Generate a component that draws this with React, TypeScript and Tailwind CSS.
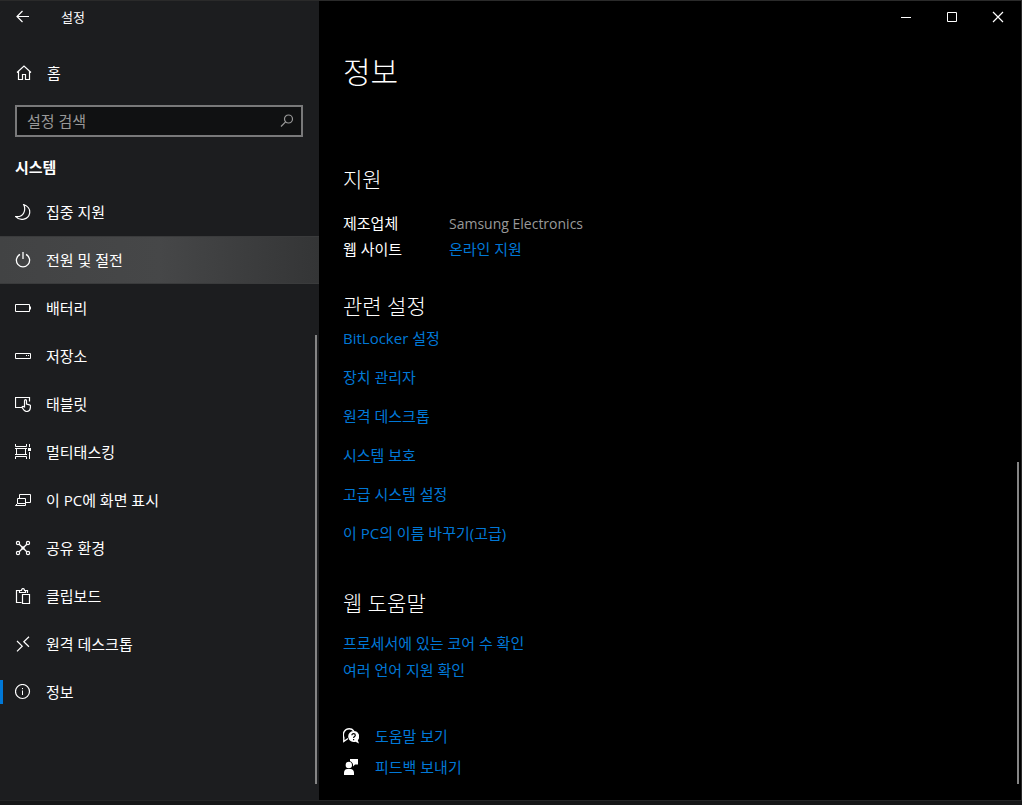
import { useState, type ReactNode } from 'react';

type NavItem = {
  id: string;
  label: string;
  icon: ReactNode;
};

function Icon({ children }: { children: ReactNode }) {
  return (
    <svg width="16" height="16" viewBox="0 0 16 16" fill="none" stroke="currentColor" strokeWidth="1" className="shrink-0" aria-hidden="true">
      {children}
    </svg>
  );
}

const navItems: NavItem[] = [
  {
    id: 'focus',
    label: '집중 지원',
    icon: (
      <Icon>
        <path d="M8.700.6c4 1.300 6.600 4.700 5.900 8.700-1.200 6.200-9.300 8.200-13.900 3.300 3.300.4 6.500-.6 8-3.600 1.300-2.600 1.300-5.600 0-8.400z" strokeWidth="1.200" />
      </Icon>
    ),
  },
  {
    id: 'power',
    label: '전원 및 절전',
    icon: (
      <Icon>
        <path d="M5 2.300a6.600 6.600 0 1 0 6 0M8 0v7" strokeWidth="1.300" />
      </Icon>
    ),
  },
  {
    id: 'battery',
    label: '배터리',
    icon: (
      <Icon>
        <path d="M.5 4.500h14v7H.5zM15.500 6.500v3" />
      </Icon>
    ),
  },
  {
    id: 'storage',
    label: '저장소',
    icon: (
      <Icon>
        <path d="M.5 5.500h15v5H.5zM11 7.500h1M13 7.500h1" />
      </Icon>
    ),
  },
  {
    id: 'tablet',
    label: '태블릿',
    icon: (
      <Icon>
        <path d="M7 11.500H.5v-10h14v4" strokeWidth="1.200" />
        <path
          d="M9.500 11V4.700c0-1.400 2-1.400 2 0V8l3 .8c.7.200 1 .6 1 1.200 0 3-.8 5.500-3.800 5.500-2.200 0-3-1.200-4.300-3.500-.8-1.300.6-2.100 1.300-1.300z"
          strokeWidth="1.200"
        />
      </Icon>
    ),
  },
  {
    id: 'multitasking',
    label: '멀티태스킹',
    icon: (
      <Icon>
        <path d="M.5 0v2.500h11V0M.5 15v-2.500h11V15M1.500 5v5.500M10.500 5v5.500M0 4.500h12M0 10.500h12M14.500 0v3M14.500 8v7" />
        <path d="M13 4h3v3h-3z" fill="currentColor" stroke="none" />
      </Icon>
    ),
  },
  {
    id: 'projecting',
    label: '이 PC에 화면 표시',
    icon: (
      <Icon>
        <path d="M4.500 6V2.500h11v8H11M2.500 6.500h8v5h-8zM.5 13.500l2-2h8v2z" />
      </Icon>
    ),
  },
  {
    id: 'shared',
    label: '공유 환경',
    icon: (
      <Icon>
        <path d="M4.200 4.200l7.600 7.600M11.800 4.200l-7.600 7.600" strokeWidth="1.300" />
        <circle cx="3" cy="3" r="1.600" strokeWidth="1.200" />
        <circle cx="13" cy="3" r="1.600" strokeWidth="1.200" />
        <circle cx="3" cy="13" r="1.600" strokeWidth="1.200" />
        <circle cx="13" cy="13" r="1.600" strokeWidth="1.200" />
        <circle cx="8" cy="8" r="1.200" fill="currentColor" />
      </Icon>
    ),
  },
  {
    id: 'clipboard',
    label: '클립보드',
    icon: (
      <Icon>
        <path d="M6.500 14.500h-5v-12H5M10 2.500h2.500V5M4.500 4.500v-2h2c0-2.600 3-2.600 3 0h1v2zM7.500 6.500h7v9h-7z" strokeWidth="1.200" />
      </Icon>
    ),
  },
  {
    id: 'remote',
    label: '원격 데스크톱',
    icon: (
      <Icon>
        <path d="M2 5l5.200 5.200L2 15.400M14 .8L8.800 5.800 14 10.800" strokeWidth="1.200" />
      </Icon>
    ),
  },
  {
    id: 'about',
    label: '정보',
    icon: (
      <Icon>
        <circle cx="7.500" cy="7.500" r="7" strokeWidth="1.200" />
        <path d="M7.500 6.500V11M7.500 4v1.200" />
      </Icon>
    ),
  },
];

const relatedLinks = ['BitLocker 설정', '장치 관리자', '원격 데스크톱', '시스템 보호', '고급 시스템 설정', '이 PC의 이름 바꾸기(고급)'];

const webHelpLinks = ['프로세서에 있는 코어 수 확인', '여러 언어 지원 확인'];

function TextLink({ children }: { children: ReactNode }) {
  return (
    <a href="#" className="text-[#0078d7] hover:text-[#999999]">
      {children}
    </a>
  );
}

function SectionTitle({ children }: { children: ReactNode }) {
  return <h2 className="text-[21px] leading-7 font-light">{children}</h2>;
}

function Sidebar() {
  const [query, setQuery] = useState('');
  const currentId = 'about';
  const hoveredId = 'power';

  return (
    <aside className="relative w-[319px] shrink-0 bg-[#1c1d1f]">
      <div className="flex h-8 items-center">
        <button type="button" aria-label="뒤로" className="flex h-8 w-[46px] items-center justify-center">
          <Icon>
            <path d="M14 7.500H2.500M7.500 2L2 7.500 7.500 13" strokeWidth="1.200" />
          </Icon>
        </button>
        <span className="ml-[15px] text-[13px] leading-5">설정</span>
      </div>

      <a href="#" className="mt-4 flex h-12 items-center gap-[15px] px-4">
        <Icon>
          <path d="M1 7.500L8 1l7 6.500M2.500 6.500v8h4v-5h3v5h4v-8" strokeWidth="1.200" />
        </Icon>
        홈
      </a>

      <div className="mr-4 ml-[15px] mt-2 flex h-8 items-center border-2 border-[#79797a] bg-[#101112] px-[10px]">
        <input
          type="text"
          aria-label="설정 검색"
          placeholder="설정 검색"
          value={query}
          onChange={(event) => setQuery(event.target.value)}
          className="h-7 min-w-0 flex-1 bg-transparent leading-5 outline-none placeholder:text-[#999999]"
        />
        <button type="button" aria-label="검색" className="-mr-1 text-[#999999]">
          <Icon>
            <circle cx="9.500" cy="6" r="4" strokeWidth="1.200" />
            <path d="M6.600 8.900L2 13.500" strokeWidth="1.200" />
          </Icon>
        </button>
      </div>

      <h2 className="mt-3 mb-[3px] px-[15px] leading-9 font-bold">시스템</h2>

      <nav>
        {navItems.map((item) => (
          <a
            key={item.id}
            href="#"
            aria-current={item.id === currentId ? 'page' : undefined}
            className={
              item.id === hoveredId
                ? 'flex h-12 items-center border-y border-[#3a3b3c] bg-linear-to-r from-[#424344] via-[#464748] to-[#343536]'
                : 'flex h-12 items-center'
            }
          >
            <span className={item.id === currentId ? 'h-6 w-[3px] bg-[#0078d7]' : 'h-6 w-[3px]'} />
            <span className="flex items-center gap-[15px] pl-3">
              {item.icon}
              {item.label}
            </span>
          </a>
        ))}
      </nav>

      <div className="absolute top-[334px] right-[2px] bottom-4 w-[2px] bg-[#858585]" />
    </aside>
  );
}

function WindowControls() {
  return (
    <div className="flex h-8 justify-end">
      <button type="button" aria-label="최소화" className="flex w-[46px] items-center justify-center">
        <Icon>
          <path d="M3 8.500h10" />
        </Icon>
      </button>
      <button type="button" aria-label="최대화" className="flex w-[46px] items-center justify-center">
        <Icon>
          <path d="M3.500 3.500h9v9h-9z" />
        </Icon>
      </button>
      <button type="button" aria-label="닫기" className="flex w-[46px] items-center justify-center">
        <Icon>
          <path d="M3 3l10 10M13 3L3 13" strokeWidth="1.200" />
        </Icon>
      </button>
    </div>
  );
}

function AboutPage() {
  return (
    <main className="relative min-w-0 flex-1 border-r border-[#2a2a2a] bg-black">
      <WindowControls />

      <div className="px-6 pb-5">
        <h1 className="mt-[19px] text-[30px] leading-10 font-light">정보</h1>

        <section className="mt-[73px]">
          <SectionTitle>지원</SectionTitle>
          <dl className="mt-5 grid grid-cols-[106px_1fr] items-baseline gap-y-[5px]">
            <dt>제조업체</dt>
            <dd className="text-[14px] text-[#999999]">Samsung Electronics</dd>
            <dt>웹 사이트</dt>
            <dd>
              <TextLink>온라인 지원</TextLink>
            </dd>
          </dl>
        </section>

        <section className="mt-[33px]">
          <SectionTitle>관련 설정</SectionTitle>
          <ul className="mt-2 flex flex-col gap-[19px]">
            {relatedLinks.map((label) => (
              <li key={label}>
                <TextLink>{label}</TextLink>
              </li>
            ))}
          </ul>
        </section>

        <section className="mt-[46px]">
          <SectionTitle>웹 도움말</SectionTitle>
          <ul className="mt-4 flex flex-col gap-[7px]">
            {webHelpLinks.map((label) => (
              <li key={label}>
                <TextLink>{label}</TextLink>
              </li>
            ))}
          </ul>
        </section>

        <ul className="mt-[46px] flex flex-col gap-[11px]">
          <li className="flex items-center gap-4">
            <Icon>
              <path d="M5 10.500L.8 13.500V9.600C-.8 5 2 .8 6.200.8c2.200 0 3.600 1 4.600 2.200" strokeWidth="1.400" />
              <path d="M10.500 3a5.500 5.500 0 1 0 2 10.700L16 15.600l-1.200-3.400A5.500 5.500 0 0 0 10.500 3z" fill="currentColor" stroke="none" />
              <path d="M8.900 7.200c0-2.200 3.400-2.100 3.400 0 0 1.400-1.700 1.300-1.700 2.800M10.600 11v1.200" stroke="#000000" strokeWidth="1.200" />
            </Icon>
            <TextLink>도움말 보기</TextLink>
          </li>
          <li className="flex items-center gap-4">
            <Icon>
              <g fill="currentColor" stroke="none">
                <path d="M7 0h8v5.500h-3L10 7.500V5.500C9.500 3.500 8.500 2.500 7 2.200z" />
                <circle cx="5.800" cy="6" r="3.200" />
                <path d="M1 16v-2.300C1 11.500 2.500 10 4.300 10h3.200c1.900 0 3.500 1.500 3.500 3.700V16z" />
              </g>
            </Icon>
            <TextLink>피드백 보내기</TextLink>
          </li>
        </ul>
      </div>

      <div className="absolute top-[461px] right-[2px] bottom-4 w-[2px] bg-[#858585]" />
    </main>
  );
}

export default function App() {
  return (
    <div className="flex min-h-screen flex-col border-t border-[#2a2a2a] bg-[#161718] pb-1 font-['Open_Sans','Noto_Sans_CJK_KR',sans-serif] text-[15px] leading-5 text-white">
      <div className="flex flex-1 border-b border-[#242526]">
        <Sidebar />
        <AboutPage />
      </div>
    </div>
  );
}
